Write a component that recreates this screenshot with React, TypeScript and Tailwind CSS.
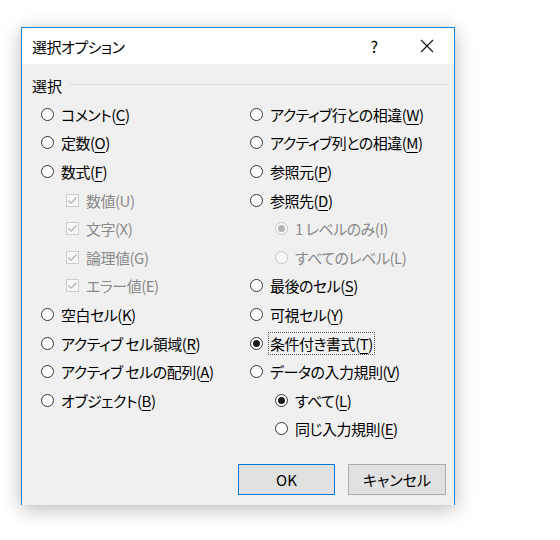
import React from 'react'

type Opt = { label: string; key?: string; indent?: boolean; kind?: 'radio' | 'check'; checked?: boolean; disabled?: boolean; focus?: boolean }

const leftOpts: Opt[] = [
  { label: 'コメント', key: 'C' },
  { label: '定数', key: 'O' },
  { label: '数式', key: 'F' },
  { label: '数値(U)', kind: 'check', indent: true, checked: true, disabled: true },
  { label: '文字(X)', kind: 'check', indent: true, checked: true, disabled: true },
  { label: '論理値(G)', kind: 'check', indent: true, checked: true, disabled: true },
  { label: 'エラー値(E)', kind: 'check', indent: true, checked: true, disabled: true },
  { label: '空白セル', key: 'K' },
  { label: 'アクティブ セル領域', key: 'R' },
  { label: 'アクティブ セルの配列', key: 'A' },
  { label: 'オブジェクト', key: 'B' },
]

const rightOpts: Opt[] = [
  { label: 'アクティブ行との相違', key: 'W' },
  { label: 'アクティブ列との相違', key: 'M' },
  { label: '参照元', key: 'P' },
  { label: '参照先', key: 'D' },
  { label: '1 レベルのみ(I)', indent: true, checked: true, disabled: true },
  { label: 'すべてのレベル(L)', indent: true, disabled: true },
  { label: '最後のセル', key: 'S' },
  { label: '可視セル', key: 'Y' },
  { label: '条件付き書式', key: 'T', checked: true, focus: true },
  { label: 'データの入力規則', key: 'V' },
  { label: 'すべて', key: 'L', indent: true, checked: true },
  { label: '同じ入力規則', key: 'E', indent: true },
]

function Radio({ checked, disabled }: { checked?: boolean; disabled?: boolean }) {
  return (
    <span className={`w-[13px] h-[13px] rounded-full border flex items-center justify-center shrink-0 ${disabled ? 'border-[#c6c6c6] bg-[#f7f7f7]' : 'border-[#333] bg-white'}`}>
      {checked && <span className={`w-[7px] h-[7px] rounded-full ${disabled ? 'bg-[#b4b4b4]' : 'bg-[#1a1a1a]'}`} />}
    </span>
  )
}

function Check({ disabled }: { disabled?: boolean }) {
  return (
    <span className={`w-[13px] h-[13px] border flex items-center justify-center shrink-0 ${disabled ? 'border-[#cccccc] bg-[#f7f7f7]' : 'border-[#333] bg-white'}`}>
      <svg width="11" height="11" viewBox="0 0 11 11">
        <path d="M1.5 5.5 L4.2 8.2 L9.5 2.5" fill="none" stroke={disabled ? '#b0b0b0' : '#1a1a1a'} strokeWidth="1.2" />
      </svg>
    </span>
  )
}

function Row({ o }: { o: Opt }) {
  return (
    <div className={`h-[28.6px] flex items-center ${o.indent ? 'pl-[25px]' : ''}`}>
      {o.kind === 'check' ? <Check disabled={o.disabled} /> : <Radio checked={o.checked} disabled={o.disabled} />}
      <span className={`ml-[6px] leading-none px-[1px] py-[3px] tracking-[-0.5px] ${o.focus ? 'outline outline-1 outline-dotted outline-[#555]' : ''} ${o.disabled ? 'text-[#8a8a8a]' : 'text-black'}`}>
        {o.label}
        {o.key && (
          <>
            (<span className="underline underline-offset-[3px] decoration-1">{o.key}</span>)
          </>
        )}
      </span>
    </div>
  )
}

export default function App() {
  return (
    <div className="w-[560px] h-[540px] bg-white pt-[27px] pl-[21px] font-['Noto_Sans_CJK_JP','Noto_Sans',sans-serif] [font-feature-settings:'palt'] text-[15px]">
      <div className="w-[434px] h-[478px] border-l border-t border-r border-[#1883d7] bg-[#f0f0f0] shadow-[0_4px_18px_rgba(0,0,0,0.28)] flex flex-col">
        <div className="h-[36px] bg-white flex items-center pl-[10px] shrink-0">
          <span className="leading-none text-black tracking-[-0.5px]">選択オプション</span>
          <span className="ml-auto text-[16px] leading-none text-black mr-[42px]">?</span>
          <svg width="14" height="14" viewBox="0 0 14 14" className="mr-[20px]">
            <path d="M1 1 L13 13 M13 1 L1 13" stroke="#111" strokeWidth="1.1" />
          </svg>
        </div>
        <div className="flex-1 flex flex-col">
          <div className="h-[36px] flex items-center pl-[10px] pr-[7px] pt-[6px]">
            <span className="leading-none text-black">選択</span>
            <span className="flex-1 h-px bg-[#dcdcdc] ml-[8px] -mt-[2px]" />
          </div>
          <div className="flex pl-[19px]">
            <div className="w-[209px] flex flex-col">
              {leftOpts.map((o) => <Row key={o.label} o={o} />)}
            </div>
            <div className="flex flex-col">
              {rightOpts.map((o) => <Row key={o.label} o={o} />)}
            </div>
          </div>
          <div className="mt-auto mb-[10px] flex justify-end gap-[13px] pr-[8px]">
            <button className="w-[97px] h-[31px] bg-[#e1e1e1] border border-[#0078d7] text-black text-[15px] leading-none">OK</button>
            <button className="w-[98px] h-[31px] bg-[#e1e1e1] border border-[#adadad] text-black text-[15px] leading-none">キャンセル</button>
          </div>
        </div>
      </div>
    </div>
  )
}
